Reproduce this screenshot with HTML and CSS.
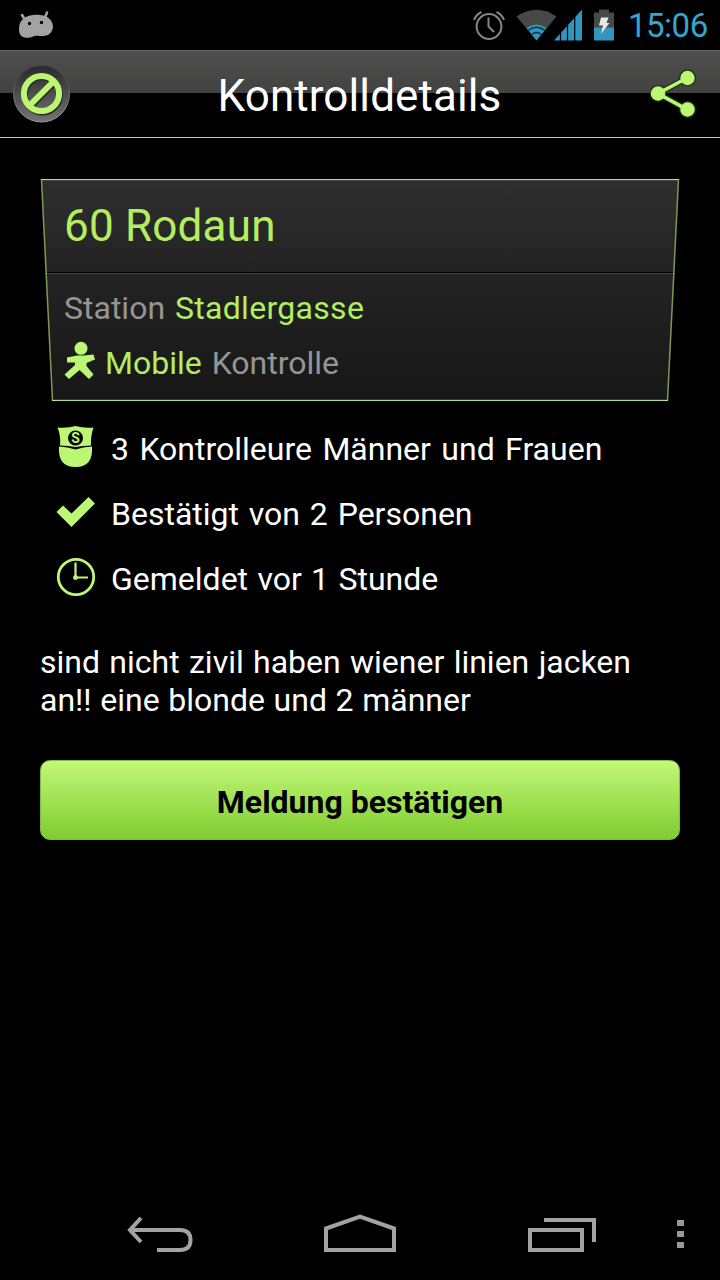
FILE: index.html
```html
<!DOCTYPE html>
<html lang="de">

<head>
    <meta charset="UTF-8">
    <meta name="viewport" content="width=device-width, initial-scale=1.0">
    <title>Kontrolldetails</title>
    <link rel="stylesheet" href="styles.css">
</head>

<body>
    <div class="statusbar">
        <svg class="droid" width="36" height="30" viewBox="18 10 36 30">
            <path d="M22 15l3 5M47 12.500l-2 5" stroke="#a3a3a3" stroke-width="2.600" stroke-linecap="round" />
            <path d="M19 29C19 21 24 16 33 15C43 13.500 52 17 53 26C53 32 49 36 43 36C38 36 36 35 33 36.500C30 38 25 38.500 22 36.500C19.500 35 19 32 19 29Z" fill="#a3a3a3" />
            <circle cx="29.500" cy="23.500" r="1.700" />
            <circle cx="41.500" cy="22.500" r="1.700" />
        </svg>
        <div class="status-icons">
            <svg width="32" height="32" viewBox="473 9 32 32" fill="none" stroke="#858585" stroke-width="2">
                <circle cx="489" cy="26.500" r="12.400" />
                <path d="M488.500 17.500v9l5.500 5.500" />
                <path d="M474 20q2-5.500 7.500-8M496.500 12q5.500 2.500 7.500 8" />
            </svg>
            <svg class="wifi" width="40" height="32" viewBox="516 9 40 32">
                <path d="M516.500 16.500Q536.500 3 556.500 16.500L536.500 40.500Z" fill="#484848" />
                <path d="M526.500 28Q536.500 21 546.500 28L536.500 40.500Z" fill="#3096bd" />
                <path d="M528 30.500Q536.500 24 545 30.500M531.500 34.500Q536.500 30.500 541.500 34.500" fill="none" stroke="#0c3447" stroke-width="1.500" />
            </svg>
            <svg class="signal" width="29" height="32" viewBox="554 9 29 32">
                <path d="M554 40.500L582 9.500V40.500Z" fill="#3096bd" />
                <path d="M560.500 30v11M567.500 22v19M574.700 14v27" stroke="#000" stroke-width="1.200" />
            </svg>
            <svg class="battery" width="20" height="32" viewBox="594 9 20 32">
                <path d="M594 12.500h5v-3h10v3h5V28h-20Z" fill="#484848" />
                <path d="M594 27.500h20v13h-20Z" fill="#3096bd" />
                <path d="M601 17.500h7.500l-2 5.500h3l-8.500 11 2-8.500h-4Z" fill="#e8e8e8" />
            </svg>
            <span class="clock">15:06</span>
        </div>
    </div>

    <div class="header">
        <svg width="60" height="60" viewBox="11 64 60 60">
            <defs>
                <linearGradient id="knob" x1="0" y1="0" x2="0" y2="1">
                    <stop offset="0" stop-color="#292929" />
                    <stop offset="1" stop-color="#737373" />
                </linearGradient>
                <linearGradient id="knobEdge" x1="0" y1="0" x2="0" y2="1">
                    <stop offset="0" stop-color="#303030" />
                    <stop offset="1" stop-color="#a0a0a0" />
                </linearGradient>
            </defs>
            <circle cx="41.500" cy="94" r="28" fill="url(#knob)" stroke="url(#knobEdge)" />
            <g fill="none" stroke="#2c2c2c" stroke-width="6">
                <circle cx="42.500" cy="95" r="17.600" />
                <path d="M30.500 107l24-24" />
            </g>
            <g fill="none" stroke="#bcf774" stroke-width="6">
                <circle cx="41.500" cy="93.500" r="17.600" />
                <path d="M29.500 105.500l24-24" />
            </g>
        </svg>
        <h1>Kontrolldetails</h1>
        <svg width="50" height="52" viewBox="648 68 50 52">
            <g stroke="#22301a" stroke-width="2" fill="#22301a">
                <circle cx="658" cy="93.500" r="7.500" />
                <circle cx="687.500" cy="78" r="7.500" />
                <circle cx="687.500" cy="109.500" r="7.500" />
                <path d="M687 78L658 93.500L687 109.500" fill="none" stroke-width="6" />
            </g>
            <g fill="#bcf774">
                <circle cx="658" cy="93.500" r="7.200" />
                <circle cx="687.500" cy="78" r="7.200" />
                <circle cx="687.500" cy="109.500" r="7.200" />
                <path d="M687 78L658 93.500L687 109.500" fill="none" stroke="#bcf774" stroke-width="3.600" />
            </g>
        </svg>
    </div>

    <div class="content">
        <div class="card">
            <svg class="card-shape" width="640" height="222" viewBox="0 0 640 222">
                <defs>
                    <linearGradient id="panel" x1="0" y1="0" x2="0" y2="1">
                        <stop offset="0" stop-color="#2e2e2e" />
                        <stop offset="0.420" stop-color="#232323" />
                        <stop offset="1" stop-color="#171717" />
                    </linearGradient>
                </defs>
                <path d="M1.500 0.500H638.500L627.500 221.500H12.500Z" fill="url(#panel)" stroke="#7d9a55" stroke-width="1.500" />
                <path d="M1 0.500H639M12 221.500H628" stroke="#b5dc88" />
                <path d="M7 93.500H633" stroke="#000" />
                <path d="M7 94.500H633" stroke="#414141" />
            </svg>
            <h2>60 Rodaun</h2>
            <div class="card-body">
                <p class="station">Station <b>Stadlergasse</b></p>
                <p class="kind">
                    <svg width="32" height="38" viewBox="64 341 32 38" fill="#bcf774">
                        <circle cx="81" cy="348.300" r="6.500" />
                        <path d="M67 357.500L77 355.500H84L93.500 354.500L95 359.500L86.500 363V366L93.500 374.500L89 379L79.500 370L69 379L64.500 374.500L75 365V362.500L67 362.500Z" />
                    </svg>
                    <b>Mobile</b> <span>Kontrolle</span>
                </p>
            </div>
        </div>

        <ul class="facts">
            <li>
                <svg width="40" height="44" viewBox="56 425 40 44">
                    <path d="M57.500 427.500Q67 428.500 75.500 426Q84 428.500 93.500 427.500Q90.500 436 91 445.500Q83 445.500 75.500 447Q68 445.500 60 445.500Q61 436 57.500 427.500Z" fill="#bcf774" />
                    <path d="M59 446.500Q68 447 75.500 449.500Q83 447 92 446.500Q93.500 467 75.500 467Q57.500 467 59 446.500Z" fill="#bcf774" />
                    <circle cx="75.500" cy="438" r="7.500" />
                    <text x="75.500" y="443" class="badge" text-anchor="middle">S</text>
                </svg>
                <span class="count">3 Kontrolleure Männer und Frauen</span>
            </li>
            <li>
                <svg width="40" height="44" viewBox="56 490 40 44">
                    <path d="M56.500 512L63 505.500L71.500 513.500L88.500 497L95 503.500L71.500 527Z" fill="#bcf774" />
                </svg>
                <span>Bestätigt von 2 Personen</span>
            </li>
            <li>
                <svg width="40" height="44" viewBox="56 555 40 44" fill="none" stroke="#bcf774">
                    <circle cx="76" cy="577" r="17.700" stroke-width="2.800" />
                    <path d="M75.500 562.500v15M76 577.500h12" stroke-width="2.200" />
                    <circle cx="75.500" cy="577.500" r="2" fill="#bcf774" stroke-width="1" />
                </svg>
                <span class="reported">Gemeldet vor 1 Stunde</span>
            </li>
        </ul>

        <p class="note"><span class="note-first">sind nicht zivil haben wiener linien jacken</span><br>an!! eine blonde und 2 männer</p>

        <button>Meldung bestätigen</button>
    </div>

    <div class="navbar">
        <svg width="68" height="36" viewBox="126 1217 68 36" fill="none" stroke="#a3a3a3" stroke-width="4">
            <path d="M131 1230H180Q190.500 1230 190.500 1240Q190.500 1250 180 1250H157" />
            <path d="M141 1218L130 1230L141 1242" />
        </svg>
        <svg class="home" width="74" height="40" viewBox="323 1213 74 40" fill="none" stroke="#a3a3a3" stroke-width="4">
            <path d="M326 1250V1228.500L360 1216.500L394 1228.500V1250Z" />
        </svg>
        <svg class="recent" width="68" height="36" viewBox="528 1217 68 36" fill="none" stroke="#a3a3a3" stroke-width="4">
            <path d="M530 1230H582V1250H530Z" />
            <path d="M544 1220H594V1242" />
        </svg>
        <svg class="more" width="8" height="34" viewBox="677 1219 8 34" fill="#989898">
            <path d="M677 1220h7v6h-7ZM677 1231h7v6h-7ZM677 1242h7v6h-7Z" />
        </svg>
    </div>
</body>

</html>
```

FILE: styles.css
```css
* {
    box-sizing: border-box;
}

body {
    margin: 0;
    height: 1280px;
    display: flex;
    flex-direction: column;
    background-color: #000;
    color: #fff;
    font-family: Roboto, sans-serif;
    font-size: 32px;
    overflow: hidden;
}

svg {
    display: block;
    flex: none;
}

h1, h2, p, ul {
    margin: 0;
    padding: 0;
    font-weight: normal;
    white-space: nowrap;
}

b {
    font-weight: normal;
    color: #b4ee60;
}

.statusbar {
    height: 50px;
    padding: 0 12px 0 18px;
    display: flex;
    align-items: center;
    justify-content: space-between;
}

.status-icons {
    display: flex;
    align-items: center;
}

.wifi {
    margin-left: 11px;
}

.signal {
    margin-left: -2px;
}

.battery {
    margin-left: 11px;
}

.clock {
    width: 80px;
    margin-left: 14px;
    padding-top: 2px;
    color: #35a5d0;
    font-size: 33px;
    line-height: 38px;
    letter-spacing: -0.5px;
}

.header {
    height: 88px;
    padding: 0 22px 0 11px;
    display: flex;
    align-items: center;
    justify-content: space-between;
    border-top: 1px solid #686868;
    border-bottom: 1px solid #b3d88a;
    background: linear-gradient(#4e4e4d, #424241 42px, #000 42px);
}

h1 {
    padding-top: 4px;
    font-size: 44px;
    line-height: 52px;
    letter-spacing: 0.1px;
}

.content {
    flex: 1;
    padding: 41px 40px 0;
}

.card {
    position: relative;
    height: 222px;
}

.card-shape {
    position: absolute;
    left: 0;
    top: 0;
    z-index: -1;
}

h2 {
    height: 94px;
    padding-left: 24px;
    font-size: 44px;
    line-height: 95px;
    letter-spacing: 0.2px;
    color: #b4ee60;
}

.card-body {
    padding: 8px 24px 0;
    color: #959595;
}

.card-body p {
    height: 55px;
    line-height: 55px;
}

.station {
    word-spacing: 2px;
}

.station b {
    letter-spacing: 0.3px;
}

.card-body .kind {
    display: flex;
    align-items: center;
}

.kind svg {
    margin-bottom: 8px;
}

.kind b {
    margin: 0 10px 0 9px;
}

.facts {
    list-style: none;
    padding: 13px 16px 0;
}

.facts li {
    height: 65px;
    display: flex;
    align-items: center;
    gap: 15px;
}

.facts span {
    padding-top: 4px;
    word-spacing: 1.9px;
}

.facts .count {
    word-spacing: 2.5px;
}

.facts .reported {
    word-spacing: 1.4px;
}

.badge {
    font-size: 14px;
    font-weight: bold;
    fill: #bcf774;
}

.note {
    margin-top: 34px;
    line-height: 38px;
    word-spacing: 0.7px;
}

.note-first {
    word-spacing: 1.4px;
}

button {
    display: block;
    width: 640px;
    height: 80px;
    margin-top: 41px;
    padding: 3px 0 0;
    border: 1px solid #86b64c;
    border-radius: 10px;
    background: linear-gradient(#c1f878, #80cc30);
    color: #000;
    font-family: Roboto, sans-serif;
    font-size: 32px;
    font-weight: bold;
}

.navbar {
    height: 96px;
    padding: 0 0 27px 126px;
    display: flex;
    align-items: flex-end;
}

.home {
    margin-left: 129px;
}

.recent {
    margin-left: 131px;
}

.more {
    margin-left: 81px;
}
```
